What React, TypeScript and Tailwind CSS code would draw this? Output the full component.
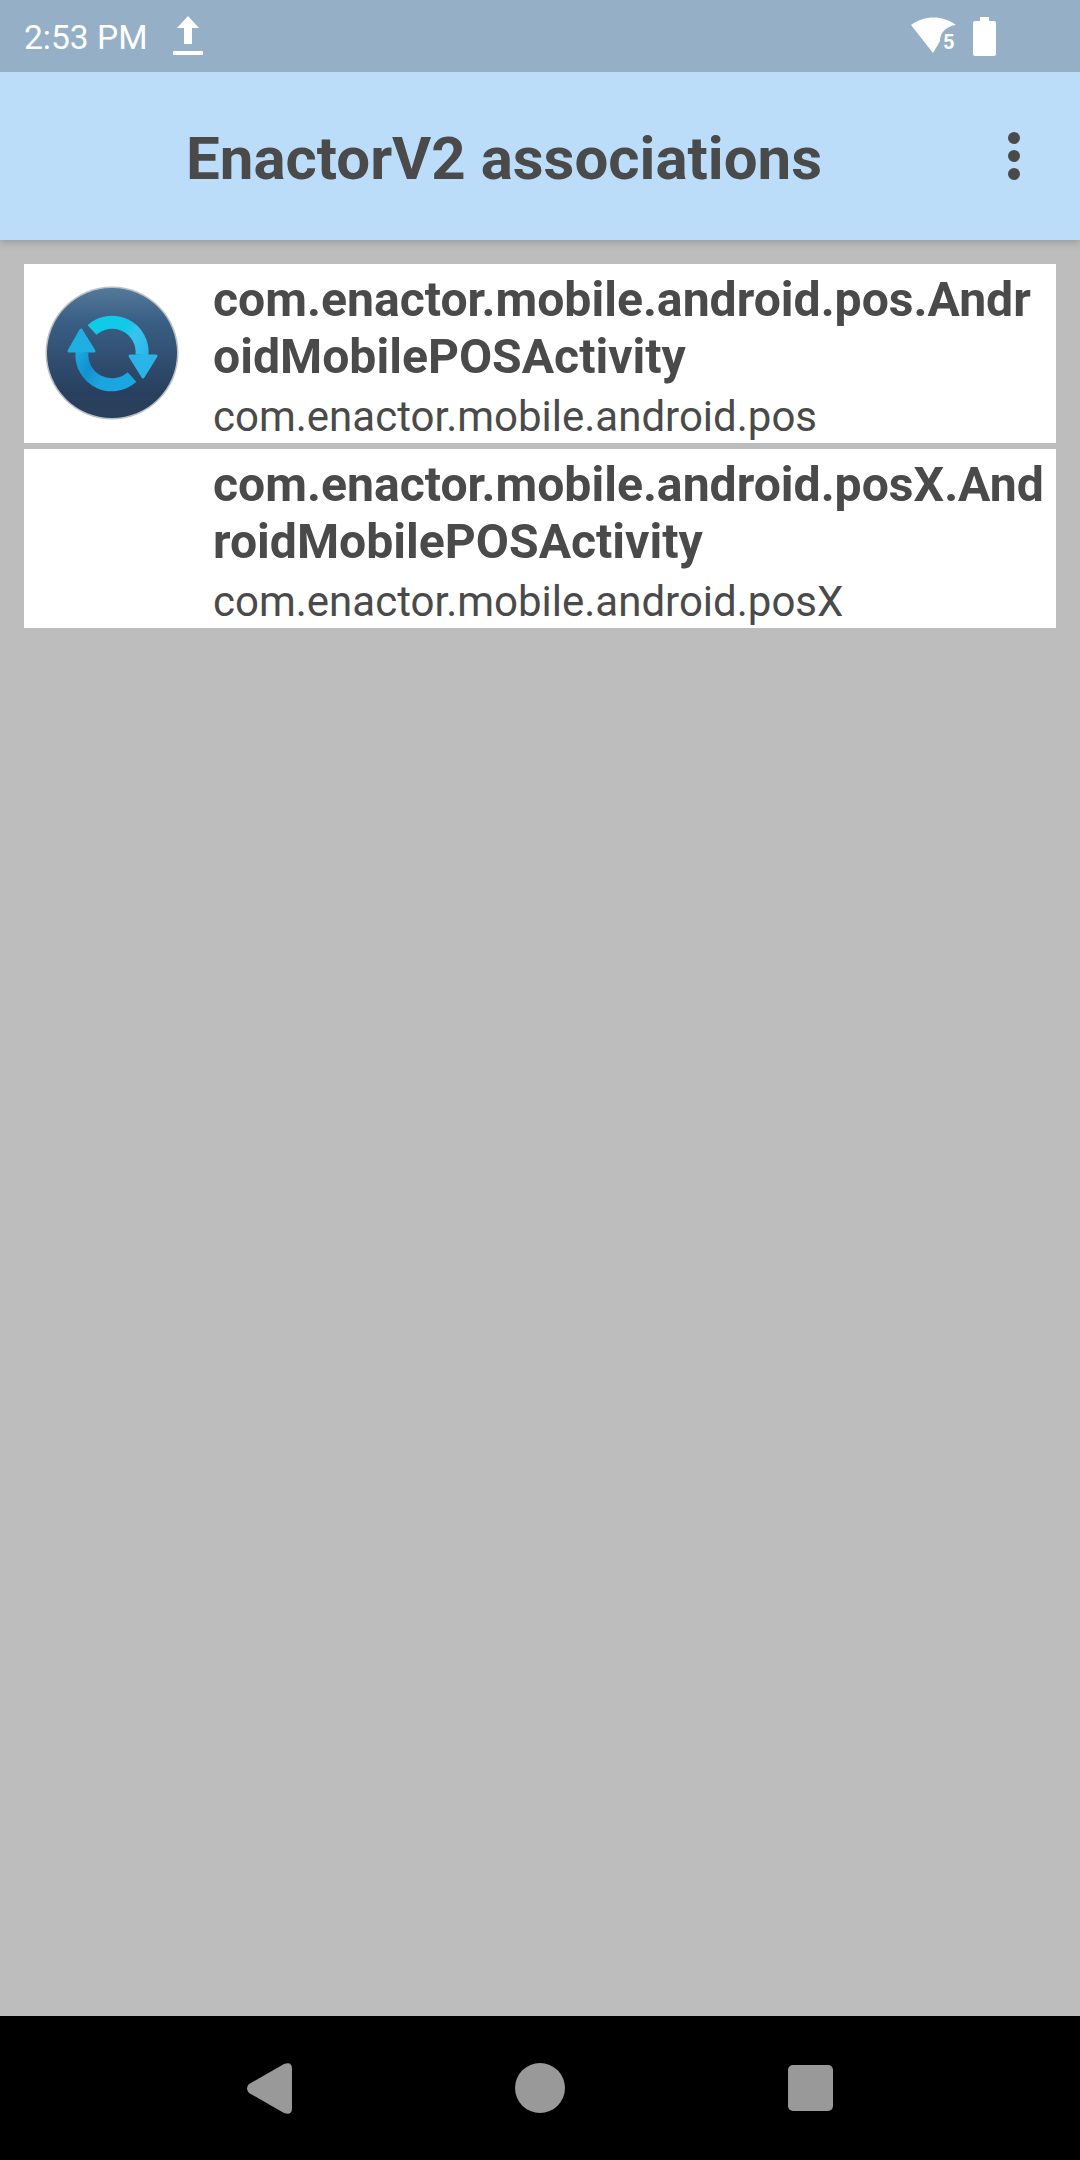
export default function App() {
  const rows = [
    { title: "com.enactor.mobile.android.pos.AndroidMobilePOSActivity", sub: "com.enactor.mobile.android.pos", icon: true },
    { title: "com.enactor.mobile.android.posX.AndroidMobilePOSActivity", sub: "com.enactor.mobile.android.posX", icon: false },
  ];
  return (
    <div className="w-[1080px] h-[2160px] flex flex-col bg-[#bdbdbd] overflow-hidden font-['Roboto',sans-serif]">
      <div className="h-[72px] shrink-0 bg-[#94afc6] flex items-center text-white relative z-20">
        <span className="ml-[24px] text-[33.6px] leading-[72px] translate-y-[2px]">2:53 PM</span>
        <svg className="ml-[25px]" width="30" height="40" viewBox="0 0 30 40" fill="#fff">
          <path d="M15 0 L26 12 L19 12 L19 28 L11 28 L11 12 L4 12 Z" />
          <rect x="0" y="35" width="30" height="4" />
        </svg>
        <div className="ml-auto flex items-center mr-[84px]">
          <svg width="46" height="38" viewBox="0 0 46 38" className="mr-[16px]">
            <path d="M0 8 C13 -2 32 -2 45 8 C36 9 29 15 29 24 L22 36 Z" fill="#fff" />
            <text x="32" y="32" fontSize="20" fontWeight="700" fill="#fff" fontFamily="Roboto, sans-serif">5</text>
          </svg>
          <svg width="23" height="39" viewBox="0 0 23 39" fill="#fff">
            <path d="M7 0 H16 V4 H21 Q23 4 23 6 V37 Q23 39 21 39 H2 Q0 39 0 37 V6 Q0 4 2 4 H7 Z" />
          </svg>
        </div>
      </div>
      <div className="h-[168px] shrink-0 bg-[#bbddfa] flex items-center relative z-10 shadow-[0_2px_8px_rgba(0,0,0,0.2)]">
        <h1 className="ml-[186px] text-[60px] font-bold leading-none text-[#4a4a4a] pt-[5px]">EnactorV2 associations</h1>
        <div className="ml-auto mr-[60px] flex flex-col gap-[6px]">
          <div className="w-[12px] h-[12px] rounded-full bg-[#4a4a4a]" />
          <div className="w-[12px] h-[12px] rounded-full bg-[#4a4a4a]" />
          <div className="w-[12px] h-[12px] rounded-full bg-[#4a4a4a]" />
        </div>
      </div>
      <div className="flex-1 pt-[24px] px-[24px] flex flex-col gap-[6px]">
        {rows.map((r) => (
          <div key={r.sub} className="h-[179px] bg-white flex overflow-hidden">
            <div className="w-[189px] shrink-0 flex items-center justify-center">
              {r.icon && (
                <svg width="134" height="134" viewBox="0 0 134 134" className="-translate-x-[7px] -translate-y-[1px]">
                  <defs>
                    <linearGradient id="bg" x1="0" y1="0" x2="0" y2="1">
                      <stop offset="0" stopColor="#55799a" />
                      <stop offset="0.25" stopColor="#3a5f85" />
                      <stop offset="0.8" stopColor="#28405f" />
                      <stop offset="1" stopColor="#2a3f5a" />
                    </linearGradient>
                    <linearGradient id="top" gradientUnits="userSpaceOnUse" x1="45" y1="40" x2="100" y2="70">
                      <stop offset="0" stopColor="#0fcbe8" />
                      <stop offset="0.5" stopColor="#12c8e8" />
                      <stop offset="0.7" stopColor="#38c4ee" />
                      <stop offset="1" stopColor="#2db8ea" />
                    </linearGradient>
                    <linearGradient id="bot" gradientUnits="userSpaceOnUse" x1="90" y1="95" x2="35" y2="65">
                      <stop offset="0" stopColor="#1aa8e2" />
                      <stop offset="0.5" stopColor="#1ba4de" />
                      <stop offset="0.75" stopColor="#1390cf" />
                      <stop offset="1" stopColor="#19a8dd" />
                    </linearGradient>
                  </defs>
                  <circle cx="67" cy="67" r="66.5" fill="#b9c0c6" />
                  <circle cx="67" cy="67" r="65" fill="url(#bg)" />
                  <path d="M47 44 A30 30 0 0 1 97 69" fill="none" stroke="url(#top)" strokeWidth="13" />
                  <path d="M87 91 A30 30 0 0 1 37 66" fill="none" stroke="url(#bot)" strokeWidth="13" />
                  <path d="M85 70 H111 L98 91 Z" fill="#2bb4e6" stroke="#2bb4e6" strokeWidth="3" strokeLinejoin="round" />
                  <path d="M24 65 H49 L36 44 Z" fill="#1fb0e2" stroke="#1fb0e2" strokeWidth="3" strokeLinejoin="round" />
                </svg>
              )}
            </div>
            <div className="flex-1 min-w-0 text-[#4a4a4a] pt-[7px] pr-[8px]">
              <div className="text-[48.15px] font-bold leading-[57px] break-all">{r.title}</div>
              <div className="text-[42px] leading-[50px] mt-[7px]">{r.sub}</div>
            </div>
          </div>
        ))}
      </div>
      <div className="h-[144px] shrink-0 bg-black relative">
        <svg className="absolute left-[247px] top-[47px]" width="46" height="51" viewBox="0 0 46 51" fill="#999">
          <path d="M2 21 L37 1 Q45 -2 45 6 V45 Q45 53 37 50 L2 30 Q-2 25 2 21 Z" />
        </svg>
        <div className="absolute left-[515px] top-[47px] w-[50px] h-[50px] rounded-full bg-[#999]" />
        <div className="absolute left-[788px] top-[49px] w-[45px] h-[46px] rounded-[5px] bg-[#999]" />
      </div>
    </div>
  );
}
